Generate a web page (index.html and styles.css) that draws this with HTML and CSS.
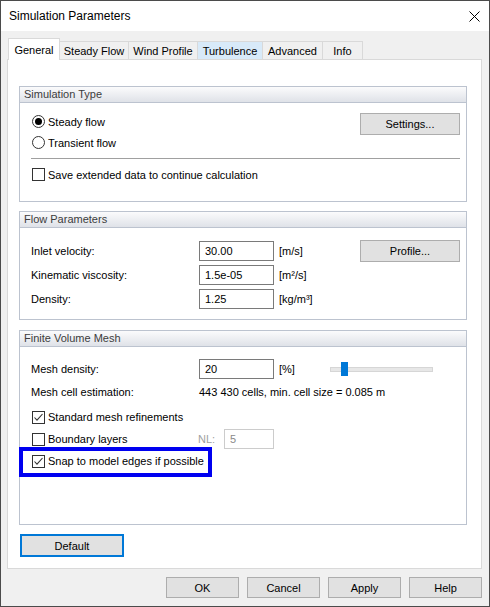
FILE: index.html
```html
<!DOCTYPE html>
<html lang="en">
<head>
  <meta charset="UTF-8">
  <title>Simulation Parameters</title>
  <link rel="stylesheet" href="styles.css">
</head>
<body>
  <div class="window">
    <div class="titlebar">
      <span class="title">Simulation Parameters</span>
      <svg class="close-icon" width="11" height="11" viewBox="0 0 11 11">
        <path d="M0.5 0.5 L10.5 10.5 M10.5 0.5 L0.5 10.5" stroke="#000" stroke-width="1" fill="none"/>
      </svg>
    </div>

    <div class="client">
      <div class="tabs">
        <div class="tab tab-active tab-general">General</div>
        <div class="tab tab-steady">Steady Flow</div>
        <div class="tab tab-wind">Wind Profile</div>
        <div class="tab tab-turb tab-hover">Turbulence</div>
        <div class="tab tab-adv">Advanced</div>
        <div class="tab tab-info">Info</div>
      </div>

      <div class="tab-panel">
        <!-- Simulation type -->
        <div class="group">
          <div class="group-head">Simulation Type</div>
          <div class="group-body type-body">
            <div class="row">
              <span class="radio checked"></span>
              <span class="opt-text">Steady flow</span>
              <button class="btn btn-side btn-settings">Settings...</button>
            </div>
            <div class="row">
              <span class="radio"></span>
              <span class="opt-text">Transient flow</span>
            </div>
            <div class="sep"></div>
            <div class="row row-save">
              <span class="check"></span>
              <span class="opt-text">Save extended data to continue calculation</span>
            </div>
          </div>
        </div>

        <!-- Flow parameters -->
        <div class="group">
          <div class="group-head">Flow Parameters</div>
          <div class="group-body flow-body">
            <div class="field-row">
              <span class="field-label">Inlet velocity:</span>
              <input class="field-input" type="text" value="30.00">
              <span class="unit">[m/s]</span>
              <button class="btn btn-side">Profile...</button>
            </div>
            <div class="field-row">
              <span class="field-label">Kinematic viscosity:</span>
              <input class="field-input" type="text" value="1.5e-05">
              <span class="unit">[m²/s]</span>
            </div>
            <div class="field-row">
              <span class="field-label">Density:</span>
              <input class="field-input" type="text" value="1.25">
              <span class="unit">[kg/m³]</span>
            </div>
          </div>
        </div>

        <!-- Mesh -->
        <div class="group group-mesh">
          <div class="group-head">Finite Volume Mesh</div>
          <div class="group-body mesh-body">
            <div class="field-row">
              <span class="field-label">Mesh density:</span>
              <input class="field-input" type="text" value="20">
              <span class="unit unit-pct">[%]</span>
              <div class="slider">
                <div class="slider-track"></div>
                <div class="slider-thumb"></div>
              </div>
            </div>
            <div class="field-row estimate-row">
              <span class="field-label">Mesh cell estimation:</span>
              <span>443 430 cells, min. cell size = 0.085 m</span>
            </div>
            <div class="cb-row cb-first">
              <span class="check checked">
                <svg width="11" height="11" viewBox="0 0 11 11"><path d="M1.5 5.5 L4 8.2 L9.5 2" stroke="#333" stroke-width="1.1" fill="none"/></svg>
              </span>
              <span class="opt-text">Standard mesh refinements</span>
            </div>
            <div class="cb-row">
              <span class="cb-part">
                <span class="check"></span>
                <span class="opt-text">Boundary layers</span>
              </span>
              <span class="nl-label">NL:</span>
              <input class="field-input nl-input" type="text" value="5" disabled>
            </div>
            <div class="cb-row snap-row">
              <span class="check checked">
                <svg width="11" height="11" viewBox="0 0 11 11"><path d="M1.5 5.5 L4 8.2 L9.5 2" stroke="#333" stroke-width="1.1" fill="none"/></svg>
              </span>
              <span class="opt-text">Snap to model edges if possible</span>
              <div class="highlight"></div>
            </div>
          </div>
        </div>

        <button class="btn btn-default">Default</button>
      </div>

      <div class="footer">
        <button class="btn btn-foot">OK</button>
        <button class="btn btn-foot">Cancel</button>
        <button class="btn btn-foot">Apply</button>
        <button class="btn btn-foot">Help</button>
      </div>
    </div>
  </div>
</body>
</html>
```

FILE: styles.css
```css
* {
  margin: 0;
  padding: 0;
  box-sizing: border-box;
}

body {
  font-family: 'Liberation Sans', Arial, sans-serif;
  font-size: 11px;
  color: #000;
  background: #2f3b37;
}

.window {
  width: 490px;
  height: 607px;
  border: 1px solid #4b4b4b;
  background-color: #f0f0f0;
  display: flex;
  flex-direction: column;
}

/* Title bar */
.titlebar {
  height: 30px;
  flex-shrink: 0;
  background-color: #fff;
  display: flex;
  align-items: center;
  padding-left: 8px;
}

.title {
  font-size: 12px;
}

.close-icon {
  margin-left: auto;
  margin-right: 9px;
}

/* Client area */
.client {
  flex: 1;
  display: flex;
  flex-direction: column;
  padding: 7px 7px 0 6px;
}

.tabs {
  display: flex;
  align-items: flex-end;
  height: 21px;
  padding-left: 1px;
  position: relative;
  z-index: 1;
}

.tab {
  height: 18px;
  border: 1px solid #d9d9d9;
  border-bottom: none;
  background-color: #f0f0f0;
  margin-left: -1px;
  display: flex;
  align-items: center;
  justify-content: center;
}

.tab:first-child {
  margin-left: 0;
}

.tab-active {
  height: 22px;
  margin-bottom: -1px;
  background-color: #fff;
}

.tab-hover {
  background-color: #d8eaf9;
}

.tab-general { width: 52px; }
.tab-steady { width: 70px; }
.tab-wind { width: 70px; }
.tab-turb { width: 66px; }
.tab-adv { width: 61px; }
.tab-info { width: 41px; }

.tab-panel {
  flex: 1;
  background-color: #fff;
  border: 1px solid #d9d9d9;
  padding: 26px 14px 0 11px;
}

/* Group boxes */
.group {
  border: 1px solid #bcc3cf;
}

.group + .group {
  margin-top: 9px;
}

.group-mesh {
  margin-top: 10px !important;
}

.group-head {
  height: 16px;
  border-bottom: 1px solid #bcc3cf;
  background: linear-gradient(#fbfbfc, #dfe2e8);
  color: #3c3c3c;
  padding-left: 4px;
  line-height: 15px;
}

.type-body {
  padding: 8px 6px 16px 12px;
}

.row {
  display: flex;
  align-items: center;
  height: 21px;
}

.opt-text {
  margin-left: 3px;
}

.radio {
  width: 13px;
  height: 13px;
  border: 1px solid #333;
  border-radius: 50%;
  background: #fff;
  display: flex;
  align-items: center;
  justify-content: center;
}

.radio.checked::after {
  content: '';
  width: 7px;
  height: 7px;
  border-radius: 50%;
  background: #000;
}

.check {
  width: 13px;
  height: 13px;
  border: 1px solid #333;
  background: #fff;
  flex-shrink: 0;
  display: flex;
}

.sep {
  height: 1px;
  background-color: #a0a0a0;
  margin: 5px 0 0 -1px;
}

.row-save {
  margin-top: 5px;
}

/* Buttons */
.btn {
  font-family: 'Liberation Sans', Arial, sans-serif;
  font-size: 11px;
  color: #000;
  background-color: #e1e1e1;
  border: 1px solid #adadad;
  height: 22px;
}

.btn-side {
  margin-left: auto;
  width: 100px;
}

.btn-settings {
  align-self: flex-start;
  margin-top: 2px;
}

.btn-default {
  margin-top: 9px;
  margin-left: 1px;
  width: 104px;
  height: 23px;
  border: 2px solid #0078d7;
}

/* Fields */
.flow-body {
  padding: 13px 6px 10px 11px;
}

.field-row {
  display: flex;
  align-items: center;
  height: 20px;
}

.field-row + .field-row {
  margin-top: 4px;
}

.field-label {
  width: 168px;
  flex-shrink: 0;
}

.field-input {
  width: 75px;
  height: 20px;
  border: 1px solid #7a7a7a;
  padding: 0 5px;
  font-family: 'Liberation Sans', Arial, sans-serif;
  font-size: 11px;
  color: #000;
  background: #fff;
  outline: none;
}

.unit {
  margin-left: 5px;
}

/* Mesh group */
.mesh-body {
  padding: 12px 6px 52px 11px;
}

.unit-pct {
  width: 51px;
}

.slider {
  width: 103px;
  height: 14px;
  position: relative;
  display: flex;
  align-items: center;
}

.slider-track {
  width: 100%;
  height: 5px;
  background-color: #e7e7e7;
  border: 1px solid #d6d6d6;
}

.slider-thumb {
  position: absolute;
  left: 11px;
  top: 0;
  width: 7px;
  height: 14px;
  background-color: #0078d7;
}

.field-row.estimate-row {
  margin-top: 3px;
}

.cb-row {
  display: flex;
  align-items: center;
  height: 22px;
  padding-left: 1px;
  position: relative;
}

.cb-first {
  margin-top: 4px;
}

.cb-part {
  display: flex;
  align-items: center;
  width: 166px;
}

.nl-label {
  width: 26px;
  color: #a0a0a0;
}

.nl-input {
  width: 50px;
  border-color: #cccccc;
  color: #8a8a8a;
}

.highlight {
  position: absolute;
  left: -12px;
  top: -3px;
  width: 193px;
  height: 30px;
  border: 4px solid #0000f0;
}

/* Footer */
.footer {
  display: flex;
  justify-content: flex-end;
  gap: 8px;
  padding: 8px 0 8px 0;
}

.btn-foot {
  width: 73px;
  height: 21px;
}
```
